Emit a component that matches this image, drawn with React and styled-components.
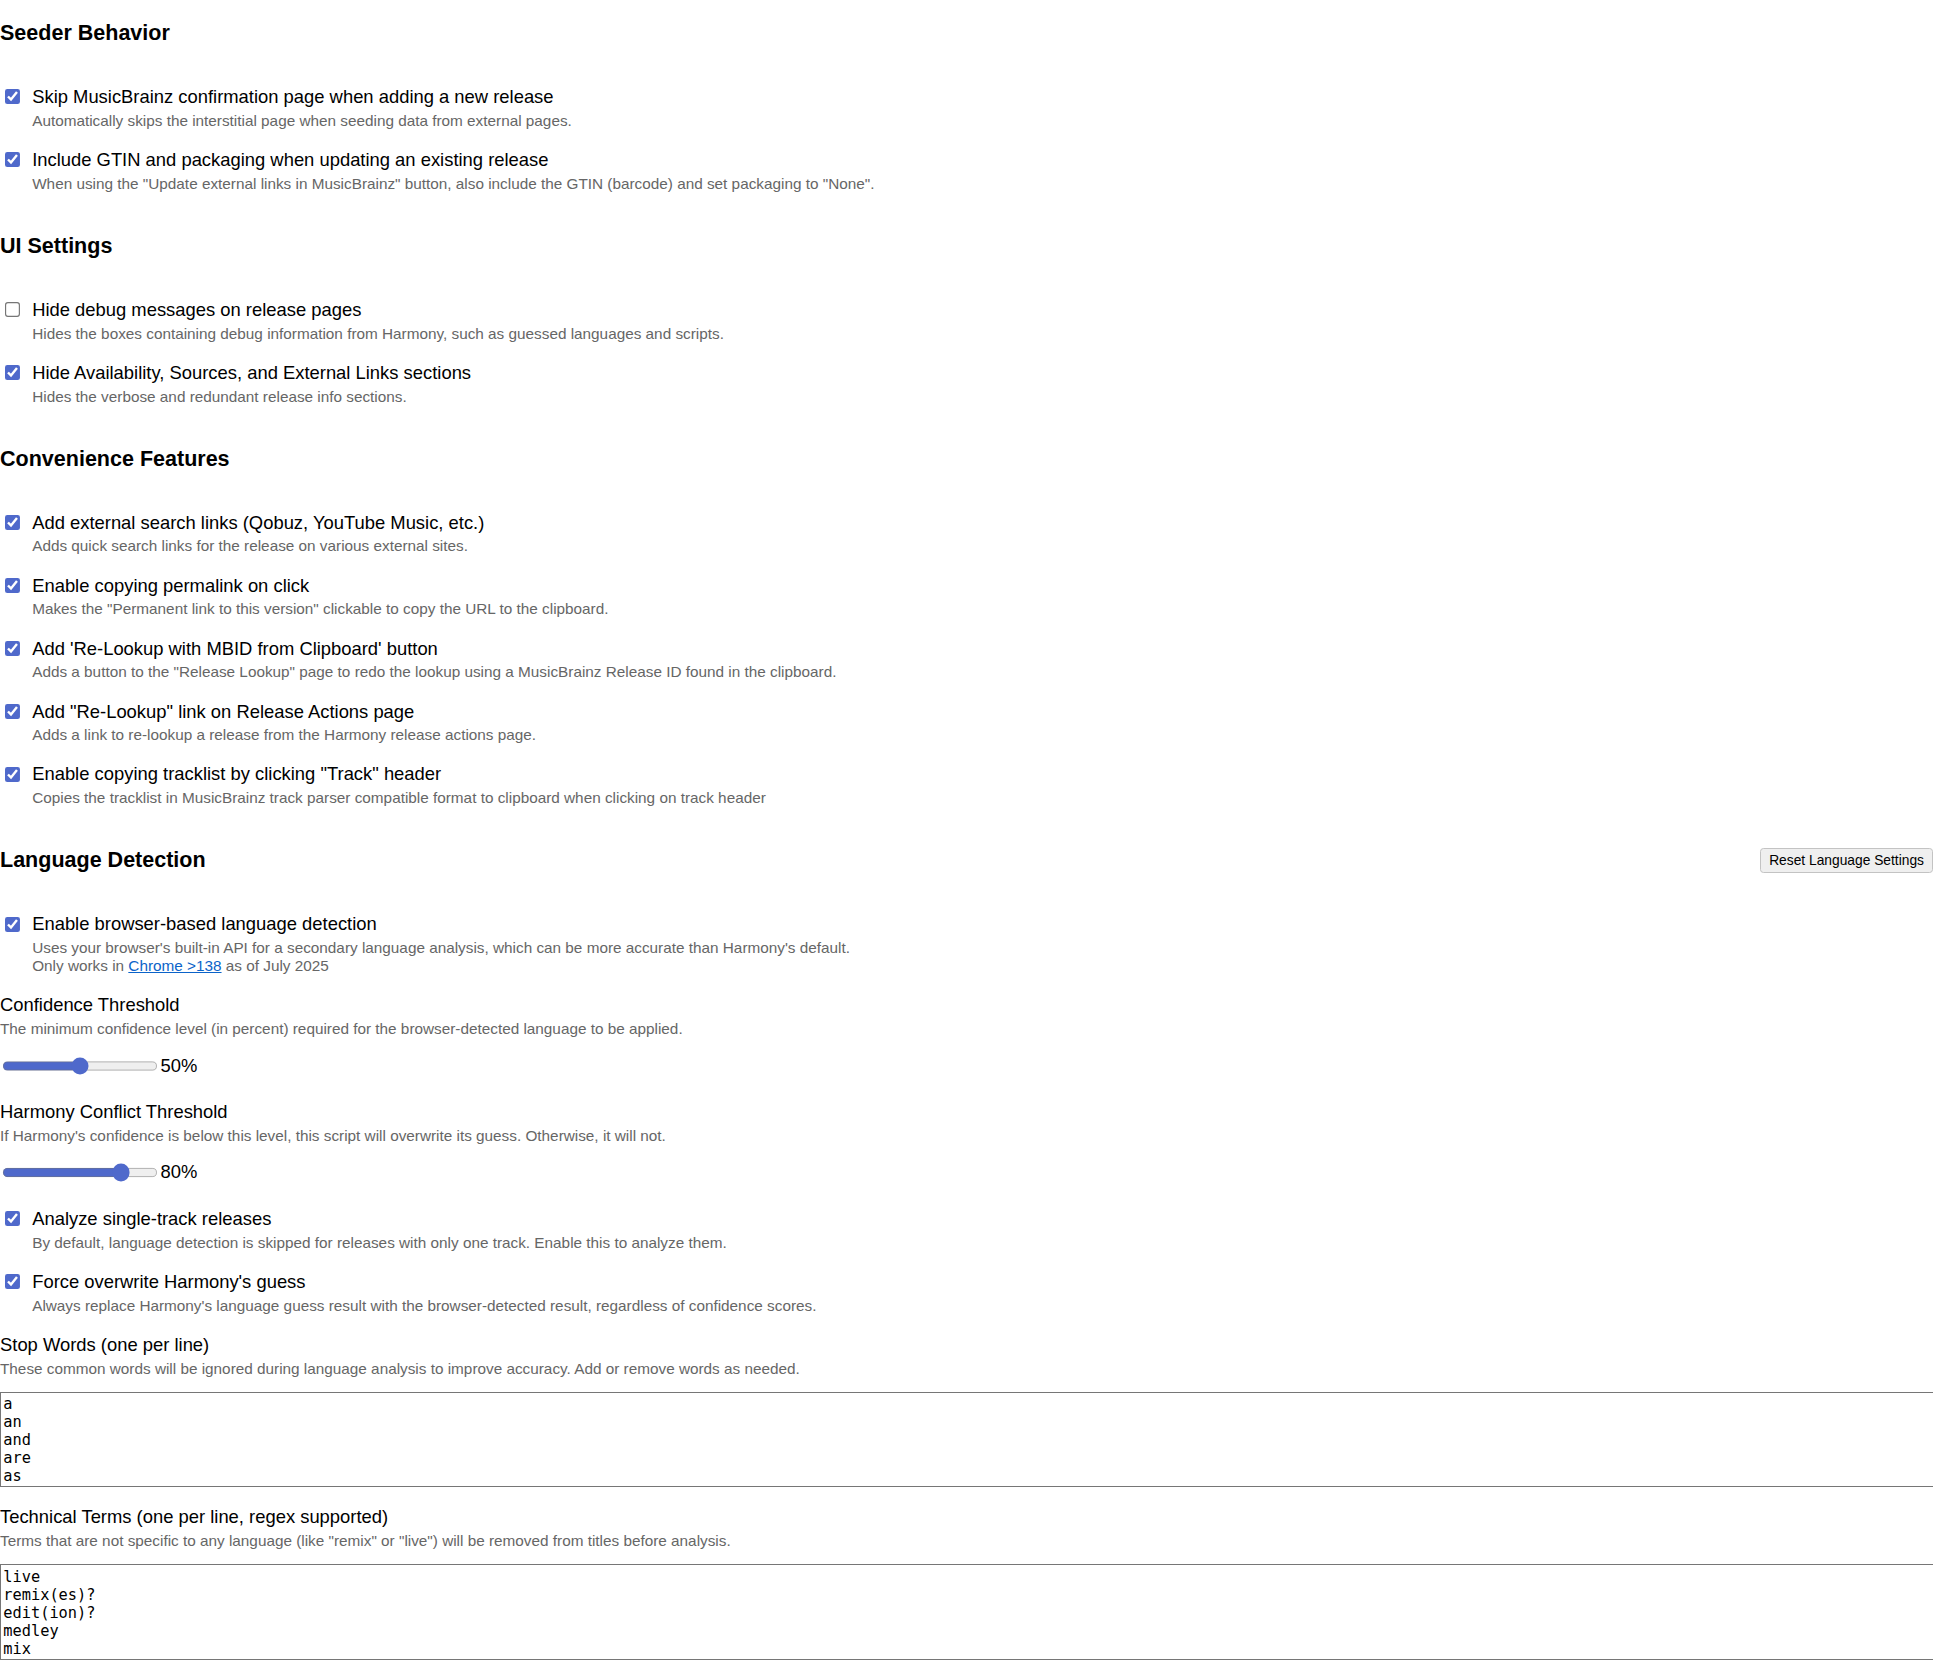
import styled, { createGlobalStyle } from "styled-components";

const GlobalStyle = createGlobalStyle`
	html,
	body {
		margin: 0;
		padding: 0;
		background: #fff;
		overflow: hidden;
	}
	body {
		font-family: "Liberation Sans", Arial, sans-serif;
		color: #000;
	}
`;

const seederOptions = [
	{
		id: "skipConfirm",
		label: "Skip MusicBrainz confirmation page when adding a new release",
		desc: "Automatically skips the interstitial page when seeding data from external pages.",
		checked: true,
	},
	{
		id: "includeGtin",
		label: "Include GTIN and packaging when updating an existing release",
		desc: 'When using the "Update external links in MusicBrainz" button, also include the GTIN (barcode) and set packaging to "None".',
		checked: true,
	},
];

const uiOptions = [
	{
		id: "hideDebug",
		label: "Hide debug messages on release pages",
		desc: "Hides the boxes containing debug information from Harmony, such as guessed languages and scripts.",
		checked: false,
	},
	{
		id: "hideSections",
		label: "Hide Availability, Sources, and External Links sections",
		desc: "Hides the verbose and redundant release info sections.",
		checked: true,
	},
];

const convenienceOptions = [
	{
		id: "searchLinks",
		label: "Add external search links (Qobuz, YouTube Music, etc.)",
		desc: "Adds quick search links for the release on various external sites.",
		checked: true,
	},
	{
		id: "copyPermalink",
		label: "Enable copying permalink on click",
		desc: 'Makes the "Permanent link to this version" clickable to copy the URL to the clipboard.',
		checked: true,
	},
	{
		id: "relookupClipboard",
		label: "Add 'Re-Lookup with MBID from Clipboard' button",
		desc: 'Adds a button to the "Release Lookup" page to redo the lookup using a MusicBrainz Release ID found in the clipboard.',
		checked: true,
	},
	{
		id: "relookupLink",
		label: 'Add "Re-Lookup" link on Release Actions page',
		desc: "Adds a link to re-lookup a release from the Harmony release actions page.",
		checked: true,
	},
	{
		id: "copyTracklist",
		label: 'Enable copying tracklist by clicking "Track" header',
		desc: "Copies the tracklist in MusicBrainz track parser compatible format to clipboard when clicking on track header",
		checked: true,
	},
];

const stopWords = [
	"a", "an", "and", "are", "as", "at", "be", "but", "by", "for", "from",
	"in", "is", "it", "of", "on", "or", "the", "to", "with",
].join("\n");

const technicalTerms = [
	"live", "remix(es)?", "edit(ion)?", "medley", "mix", "version(s)?",
	"instrumental", "acoustic", "remaster(ed)?", "demo",
].join("\n");

const Page = styled.div`
	zoom: 1.15;
	display: flex;
	flex-direction: column;
	gap: 17.4px;
	accent-color: #4f69cb;
`;

const Section = styled.section`
	display: flex;
	flex-direction: column;
	gap: 16.6px;
`;

const SectionTitle = styled.h3`
	font-size: 18.72px;
	font-weight: bold;
	line-height: normal;
	margin: 18.2px 0;
`;

const TitleRow = styled.div`
	display: flex;
	align-items: center;
	justify-content: space-between;
`;

const ResetButton = styled.button`
	font-family: "Liberation Sans", Arial, sans-serif;
	font-size: 12px;
	line-height: normal;
	color: #000;
	background: #efefef;
	border: 1px solid #c3c3c3;
	border-radius: 3px;
	padding: 3.5px 7px;
	cursor: pointer;
`;

const Option = styled.div`
	display: flex;
	align-items: flex-start;
`;

const Checkbox = styled.input.attrs({ type: "checkbox" })`
	width: 13px;
	height: 13px;
	margin: 3px 11px 3px 4px;
	flex-shrink: 0;
`;

const OptionBody = styled.div`
	display: flex;
	flex-direction: column;
`;

const Label = styled.label`
	font-size: 16px;
	line-height: normal;
	color: #000;
`;

const Desc = styled.div`
	font-size: 13.33px;
	line-height: normal;
	color: #666;
	margin-top: 3.4px;
`;

const DocLink = styled.a`
	color: #0b63c9;
	text-decoration: underline;
`;

const Field = styled.div`
	display: flex;
	flex-direction: column;
`;

const SliderRow = styled.div`
	display: flex;
	align-items: center;
	gap: 0.6px;
	height: 28px;
	margin-top: 10px;
`;

const Range = styled.input.attrs({ type: "range", min: 0, max: 100 })`
	width: 135px;
	margin: 0 2px;
`;

const SliderValue = styled.span`
	font-size: 16px;
`;

const TextBox = styled.textarea`
	display: block;
	width: 100%;
	height: 77.6px;
	margin: 12.2px 0 0;
	padding: 2px;
	border: 1px solid #767676;
	font-family: "DejaVu Sans Mono", monospace;
	font-size: 13.33px;
	line-height: normal;
	color: #000;
	resize: none;
	overflow: hidden;
`;

const CheckOption = ({ option }) => (
	<Option>
		<Checkbox id={option.id} defaultChecked={option.checked} />
		<OptionBody>
			<Label htmlFor={option.id}>{option.label}</Label>
			<Desc>{option.desc}</Desc>
		</OptionBody>
	</Option>
);

const SliderField = ({ label, desc, value }) => (
	<Field>
		<Label>{label}</Label>
		<Desc>{desc}</Desc>
		<SliderRow>
			<Range defaultValue={value} />
			<SliderValue>{value}%</SliderValue>
		</SliderRow>
	</Field>
);

const TextField = ({ label, desc, value }) => (
	<Field>
		<Label>{label}</Label>
		<Desc>{desc}</Desc>
		<TextBox rows={5} defaultValue={value} spellCheck={false} />
	</Field>
);

export default function App() {
	return (
		<>
			<GlobalStyle />
			<Page>
				<Section>
					<SectionTitle>Seeder Behavior</SectionTitle>
					{seederOptions.map((o) => (
						<CheckOption key={o.id} option={o} />
					))}
				</Section>

				<Section>
					<SectionTitle>UI Settings</SectionTitle>
					{uiOptions.map((o) => (
						<CheckOption key={o.id} option={o} />
					))}
				</Section>

				<Section>
					<SectionTitle>Convenience Features</SectionTitle>
					{convenienceOptions.map((o) => (
						<CheckOption key={o.id} option={o} />
					))}
				</Section>

				<Section>
					<TitleRow>
						<SectionTitle>Language Detection</SectionTitle>
						<ResetButton>Reset Language Settings</ResetButton>
					</TitleRow>

					<Option>
						<Checkbox id='langDetect' defaultChecked />
						<OptionBody>
							<Label htmlFor='langDetect'>Enable browser-based language detection</Label>
							<Desc>
								Uses your browser's built-in API for a secondary language analysis, which can be more
								accurate than Harmony's default.
								<br />
								Only works in <DocLink href='#'>Chrome &gt;138</DocLink> as of July 2025
							</Desc>
						</OptionBody>
					</Option>

					<SliderField
						label='Confidence Threshold'
						desc='The minimum confidence level (in percent) required for the browser-detected language to be applied.'
						value={50}
					/>

					<SliderField
						label='Harmony Conflict Threshold'
						desc="If Harmony's confidence is below this level, this script will overwrite its guess. Otherwise, it will not."
						value={80}
					/>

					<CheckOption
						option={{
							id: "singleTrack",
							label: "Analyze single-track releases",
							desc: "By default, language detection is skipped for releases with only one track. Enable this to analyze them.",
							checked: true,
						}}
					/>

					<CheckOption
						option={{
							id: "forceOverwrite",
							label: "Force overwrite Harmony's guess",
							desc: "Always replace Harmony's language guess result with the browser-detected result, regardless of confidence scores.",
							checked: true,
						}}
					/>

					<TextField
						label='Stop Words (one per line)'
						desc='These common words will be ignored during language analysis to improve accuracy. Add or remove words as needed.'
						value={stopWords}
					/>

					<TextField
						label='Technical Terms (one per line, regex supported)'
						desc={'Terms that are not specific to any language (like "remix" or "live") will be removed from titles before analysis.'}
						value={technicalTerms}
					/>
				</Section>
			</Page>
		</>
	);
}
